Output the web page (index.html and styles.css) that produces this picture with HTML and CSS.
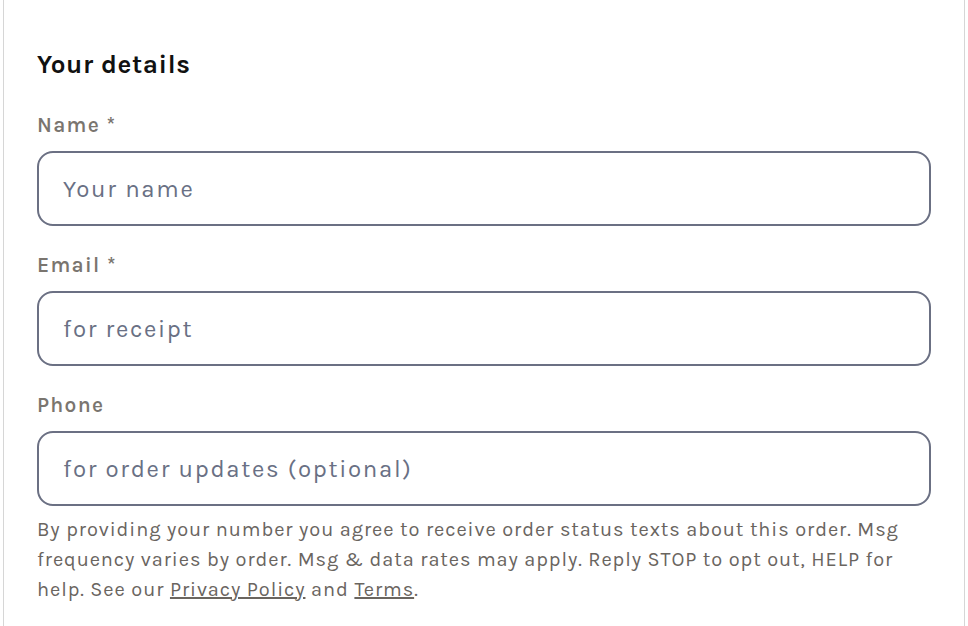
FILE: index.html
```html
<!DOCTYPE html>
<html lang="en">
<head>
    <meta charset="UTF-8">
    <meta name="viewport" content="width=device-width, initial-scale=1.0">
    <title>Checkout</title>
    <link rel="stylesheet" href="styles.css">
</head>
<body>
    <div class="card">
        <h2 class="title">Your details</h2>
        <div class="field">
            <label for="name">Name *</label>
            <input type="text" id="name" placeholder="Your name">
        </div>
        <div class="field">
            <label for="email">Email *</label>
            <input type="email" id="email" placeholder="for receipt">
        </div>
        <div class="field">
            <label for="phone">Phone</label>
            <input type="tel" id="phone" placeholder="for order updates (optional)">
            <p class="note">By providing your number you agree to receive order status texts about this order. Msg frequency varies by order. Msg &amp; data rates may apply. Reply STOP to opt out, HELP for help. See our <a href="#">Privacy Policy</a> and <a href="#">Terms</a>.</p>
        </div>
    </div>
</body>
</html>
```

FILE: styles.css
```css
*{
    margin:0;
    padding:0;
    box-sizing:border-box;
}
body{
    font-family:"Karla","Open Sans","Liberation Sans",sans-serif;
    background:#fff;
    overflow:hidden;
}
.card{
    margin:-12px 3px 0 3px;
    border:1px solid #d6d6d6;
    border-radius:8px;
    padding:61px 33px 40px 33px;
    background:#fff;
}
.title{
    font-size:26px;
    font-weight:700;
    color:#111;
    line-height:30px;
    letter-spacing:0.6px;
    margin-bottom:32px;
}
.field{
    margin-bottom:26px;
}
.field label{
    display:block;
    font-size:21px;
    font-weight:600;
    color:#7a756f;
    line-height:26px;
    letter-spacing:1.3px;
    margin-bottom:13px;
}
.field input{
    display:block;
    width:100%;
    height:75px;
    border:2px solid #6b7083;
    border-radius:16px;
    padding:0 24px;
    font-family:inherit;
    font-size:24px;
    letter-spacing:1.7px;
    color:#333;
    background:#fff;
    outline:none;
}
.field input::placeholder{
    color:#697084;
}
.note{
    margin-top:9px;
    font-size:20px;
    line-height:30px;
    letter-spacing:0.9px;
    color:#6a655f;
}
.note a{
    color:#6a655f;
}
```
